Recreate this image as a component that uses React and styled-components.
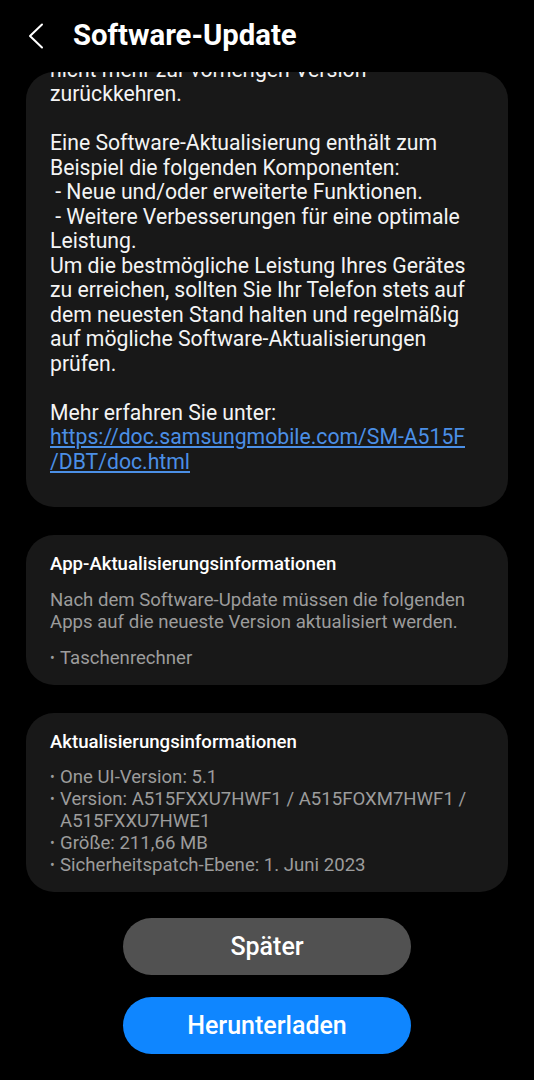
import React from 'react';
import styled, { createGlobalStyle } from 'styled-components';

const GlobalStyle = createGlobalStyle`
  html, body {
    margin: 0;
    padding: 0;
    background: #000;
  }
  body {
    font-family: Roboto, "Noto Sans", "Liberation Sans", sans-serif;
    -webkit-font-smoothing: antialiased;
  }
`;

const Page = styled.div`
  width: 534px;
  height: 1080px;
  display: flex;
  flex-direction: column;
  background: #000;
  color: #fff;
  overflow: hidden;
`;

const Header = styled.header`
  height: 72px;
  flex: none;
  display: flex;
  align-items: center;
  padding-left: 26px;
  gap: 27px;
`;

const BackButton = styled.button`
  width: 20px;
  height: 28px;
  padding: 0;
  border: 0;
  background: none;
  display: flex;
  align-items: center;
  justify-content: center;
`;

const Title = styled.h1`
  margin: 0;
  font-size: 29.3px;
  font-weight: 700;
  color: #fff;
  padding-bottom: 2px;
`;

const Viewport = styled.main`
  flex: 1;
  margin: 0 26px;
  border-radius: 28px 28px 0 0;
  overflow: hidden;
`;

const Scroller = styled.div`
  display: flex;
  flex-direction: column;
  gap: 28px;
  margin-top: -38.5px;
`;

const Card = styled.section`
  background: #181818;
  border-radius: 28px;
  padding: ${(p) => p.$pad || '18px 24px 16px'};
`;

const Body = styled.p`
  margin: 0;
  font-size: 21.2px;
  line-height: 24.5px;
  color: #f4f4f4;
  white-space: nowrap;
`;

const Link = styled.a`
  color: #4b8fe6;
  text-decoration: underline;
  text-underline-offset: 2px;
`;

const CardTitle = styled.h2`
  margin: 0 0 ${(p) => p.$gap || 14}px;
  font-size: 18.6px;
  line-height: 22px;
  font-weight: 500;
  color: #fff;
`;

const Muted = styled.p`
  margin: 0 0 14px;
  font-size: 18.6px;
  line-height: 22px;
  color: #9c9c9c;
  white-space: nowrap;
`;

const List = styled.ul`
  margin: 0;
  padding: 0;
  list-style: none;
`;

const Item = styled.li`
  display: flex;
  font-size: 18.6px;
  line-height: 22px;
  color: #9c9c9c;

  &::before {
    content: '•';
    width: 10px;
    flex: none;
    font-size: 14px;
  }
`;

const Footer = styled.footer`
  flex: none;
  display: flex;
  flex-direction: column;
  align-items: center;
  gap: 22px;
  padding: 14px 0 26px;
`;

const Button = styled.button`
  width: 288px;
  height: 57px;
  border: 0;
  border-radius: 29px;
  background: ${(p) => (p.$primary ? '#0f86ff' : '#515151')};
  color: #fff;
  font-family: Roboto, "Noto Sans", sans-serif;
  font-size: 25px;
  font-weight: 500;
`;

const updateInfo = [
  'One UI-Version: 5.1',
  'Version: A515FXXU7HWF1 / A515FOXM7HWF1 / A515FXXU7HWE1',
  'Größe: 211,66 MB',
  'Sicherheitspatch-Ebene: 1. Juni 2023',
];

export default function App() {
  return (
    <>
      <GlobalStyle />
      <Page>
        <Header>
          <BackButton aria-label="Zurück">
            <svg width="16" height="26" viewBox="0 0 16 26" fill="none">
              <polyline
                points="14,1.5 2,13 14,24.5"
                stroke="#fff"
                strokeWidth="2"
                strokeLinecap="round"
                strokeLinejoin="round"
              />
            </svg>
          </BackButton>
          <Title>Software-Update</Title>
        </Header>

        <Viewport>
          <Scroller>
            <Card $pad="24px 24px 33px">
              <Body>
                nicht mehr zur vorherigen Version
                <br />
                zurückkehren.
                <br />
                <br />
                Eine Software-Aktualisierung enthält zum
                <br />
                Beispiel die folgenden Komponenten:
                <br />
                &nbsp;- Neue und/oder erweiterte Funktionen.
                <br />
                &nbsp;- Weitere Verbesserungen für eine optimale
                <br />
                Leistung.
                <br />
                Um die bestmögliche Leistung Ihres Gerätes
                <br />
                zu erreichen, sollten Sie Ihr Telefon stets auf
                <br />
                dem neuesten Stand halten und regelmäßig
                <br />
                auf mögliche Software-Aktualisierungen
                <br />
                prüfen.
                <br />
                <br />
                Mehr erfahren Sie unter:
                <br />
                <Link href="#">
                  https://doc.samsungmobile.com/SM-A515F
                  <br />
                  /DBT/doc.html
                </Link>
              </Body>
            </Card>

            <Card>
              <CardTitle>App-Aktualisierungsinformationen</CardTitle>
              <Muted>
                Nach dem Software-Update müssen die folgenden
                <br />
                Apps auf die neueste Version aktualisiert werden.
              </Muted>
              <List>
                <Item>Taschenrechner</Item>
              </List>
            </Card>

            <Card>
              <CardTitle $gap={13}>Aktualisierungsinformationen</CardTitle>
              <List>
                {updateInfo.map((t) => (
                  <Item key={t}>{t}</Item>
                ))}
              </List>
            </Card>
          </Scroller>
        </Viewport>

        <Footer>
          <Button>Später</Button>
          <Button $primary>Herunterladen</Button>
        </Footer>
      </Page>
    </>
  );
}
